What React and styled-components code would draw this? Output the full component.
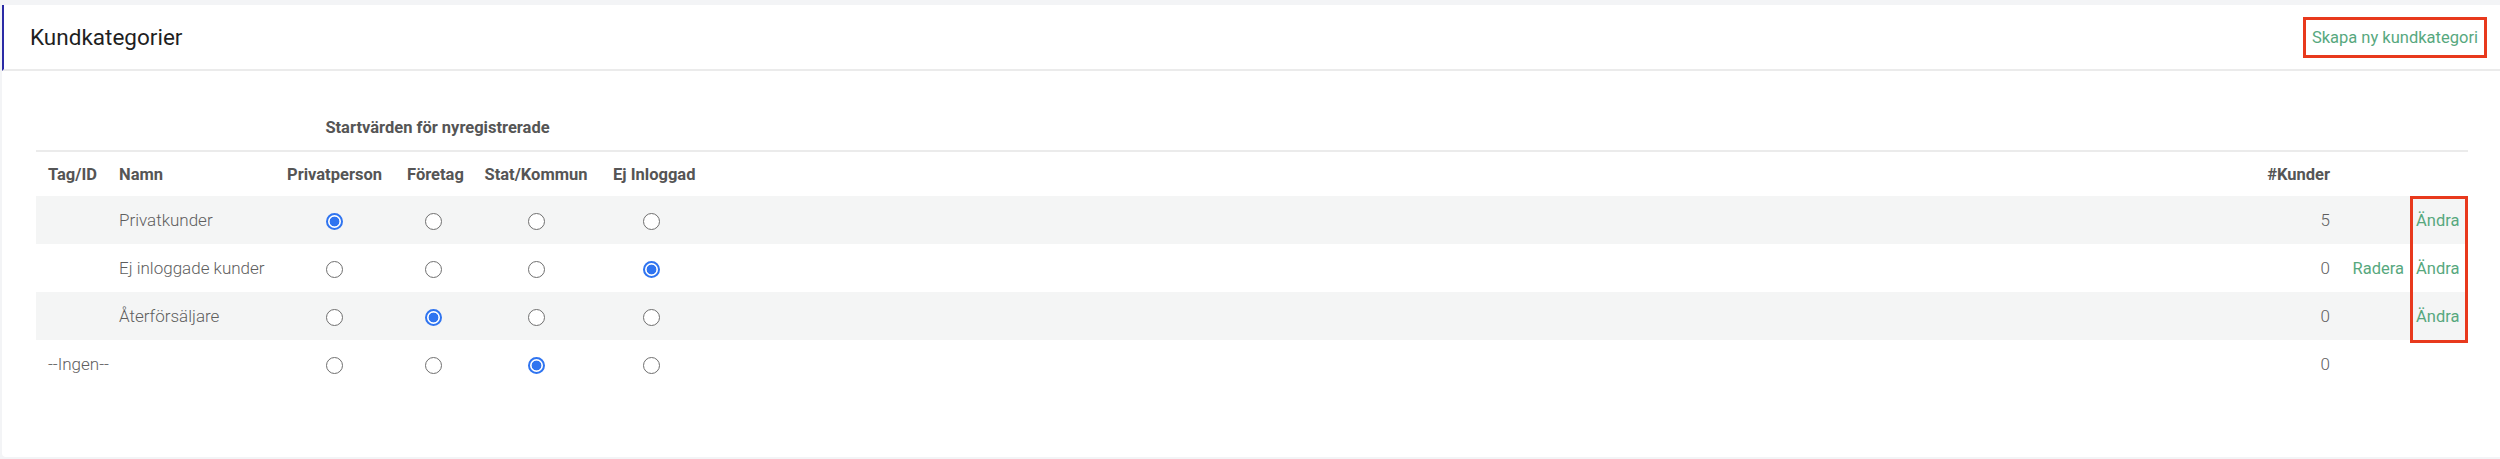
import React from "react";
import styled, { createGlobalStyle, css } from "styled-components";

const Global = createGlobalStyle`
  html, body { margin: 0; padding: 0; }
  body {
    background: #f3f4f6;
    font-family: Roboto, "Noto Sans", "Liberation Sans", sans-serif;
    overflow: hidden;
  }
`;

const Page = styled.div`
  padding: 5px 0 2px 2px;
`;

const Card = styled.section`
  background: #ffffff;
  border-radius: 4px 0 0 4px;
  min-height: 452px;
  box-sizing: border-box;
  display: flex;
  flex-direction: column;
`;

const Header = styled.header`
  height: 64px;
  border-left: 2px solid #2b2ba6;
  border-bottom: 2px solid #ebebeb;
  display: flex;
  align-items: center;
  justify-content: space-between;
  padding: 0 13px 0 26px;
`;

const Title = styled.h1`
  margin: 0;
  font-size: 22.5px;
  font-weight: 400;
  color: #1f1f1f;
`;

const Link = styled.a`
  color: #57a87e;
  font-size: 16.5px;
  font-weight: 400;
  text-decoration: none;
  cursor: pointer;
  ${(p) =>
    p.$marked &&
    css`
      border: 3px solid #e8391d;
      padding: 0 6px;
      height: 35px;
      display: flex;
      align-items: center;
    `}
`;

const Body = styled.div`
  padding: 34px 32px 0 34px;
`;

const TableWrap = styled.div`
  position: relative;
`;

const Table = styled.table`
  width: 100%;
  border-collapse: collapse;
  table-layout: fixed;
  font-size: 17px;
`;

const GroupRow = styled.tr`
  height: 46px;
  border-bottom: 2px solid #ebebeb;
`;

const HeadRow = styled.tr`
  height: 45px;
`;

const Th = styled.th`
  font-weight: 700;
  color: #555555;
  font-size: 16.5px;
  padding: 0 12px;
  text-align: ${(p) => p.$align || "left"};
  white-space: nowrap;
`;

const Row = styled.tr`
  height: 48px;
  background: ${(p) => (p.$striped ? "#f4f5f5" : "transparent")};
`;

const Td = styled.td`
  padding: 0 12px;
  text-align: ${(p) => p.$align || "left"};
  white-space: nowrap;
  color: #5e5e5e;
  font-weight: 300;
`;

const ActionTd = styled.td`
  padding: 0 6px;
  text-align: ${(p) => p.$align || "left"};
  white-space: nowrap;
`;

const Radio = styled.input.attrs({ type: "radio" })`
  appearance: none;
  -webkit-appearance: none;
  margin: 0;
  width: 17px;
  height: 17px;
  border-radius: 50%;
  border: 1px solid #6f6f6f;
  background: #fff;
  vertical-align: middle;
  box-sizing: border-box;
  cursor: pointer;
  &:checked {
    border: 2px solid #2f74f0;
    background: radial-gradient(circle, #2f74f0 0 4.6px, #fff 5.2px);
  }
`;

const Marker = styled.div`
  position: absolute;
  right: 0;
  top: 91px;
  width: 58px;
  height: 147px;
  border: 3px solid #e8391d;
  box-sizing: border-box;
  pointer-events: none;
`;

const cols = ["Privatperson", "Företag", "Stat/Kommun", "Ej Inloggad"];

const rows = [
  { tag: "", name: "Privatkunder", sel: 0, count: 5, del: false, edit: true },
  { tag: "", name: "Ej inloggade kunder", sel: 3, count: 0, del: true, edit: true },
  { tag: "", name: "Återförsäljare", sel: 1, count: 0, del: false, edit: true },
  { tag: "--Ingen--", name: "", sel: 2, count: 0, del: false, edit: false },
];

export default function App() {
  return (
    <>
      <Global />
      <Page>
        <Card>
          <Header>
            <Title>Kundkategorier</Title>
            <Link $marked>Skapa ny kundkategori</Link>
          </Header>
          <Body>
            <TableWrap>
              <Table>
                <colgroup>
                  <col style={{ width: 71 }} />
                  <col style={{ width: 167 }} />
                  <col style={{ width: 121 }} />
                  <col style={{ width: 76 }} />
                  <col style={{ width: 130 }} />
                  <col style={{ width: 100 }} />
                  <col />
                  <col style={{ width: 100 }} />
                  <col style={{ width: 68 }} />
                  <col style={{ width: 58 }} />
                </colgroup>
                <thead>
                  <GroupRow>
                    <Th />
                    <Th />
                    <Th colSpan={3} $align="center">
                      Startvärden för nyregistrerade
                    </Th>
                    <Th />
                    <Th />
                    <Th />
                    <Th />
                    <Th />
                  </GroupRow>
                  <HeadRow>
                    <Th>Tag/ID</Th>
                    <Th>Namn</Th>
                    {cols.map((c) => (
                      <Th key={c} $align="center">
                        {c}
                      </Th>
                    ))}
                    <Th />
                    <Th $align="right">#Kunder</Th>
                    <Th />
                    <Th />
                  </HeadRow>
                </thead>
                <tbody>
                  {rows.map((r, i) => (
                    <Row key={i} $striped={i % 2 === 0 && i < 3}>
                      <Td>{r.tag}</Td>
                      <Td>{r.name}</Td>
                      {cols.map((c, j) => (
                        <Td key={c} $align="center">
                          <Radio name={`r${i}`} defaultChecked={r.sel === j} />
                        </Td>
                      ))}
                      <Td />
                      <Td $align="right">{r.count}</Td>
                      <ActionTd $align="right">
                        {r.del && <Link>Radera</Link>}
                      </ActionTd>
                      <ActionTd>{r.edit && <Link>Ändra</Link>}</ActionTd>
                    </Row>
                  ))}
                </tbody>
              </Table>
              <Marker />
            </TableWrap>
          </Body>
        </Card>
      </Page>
    </>
  );
}
